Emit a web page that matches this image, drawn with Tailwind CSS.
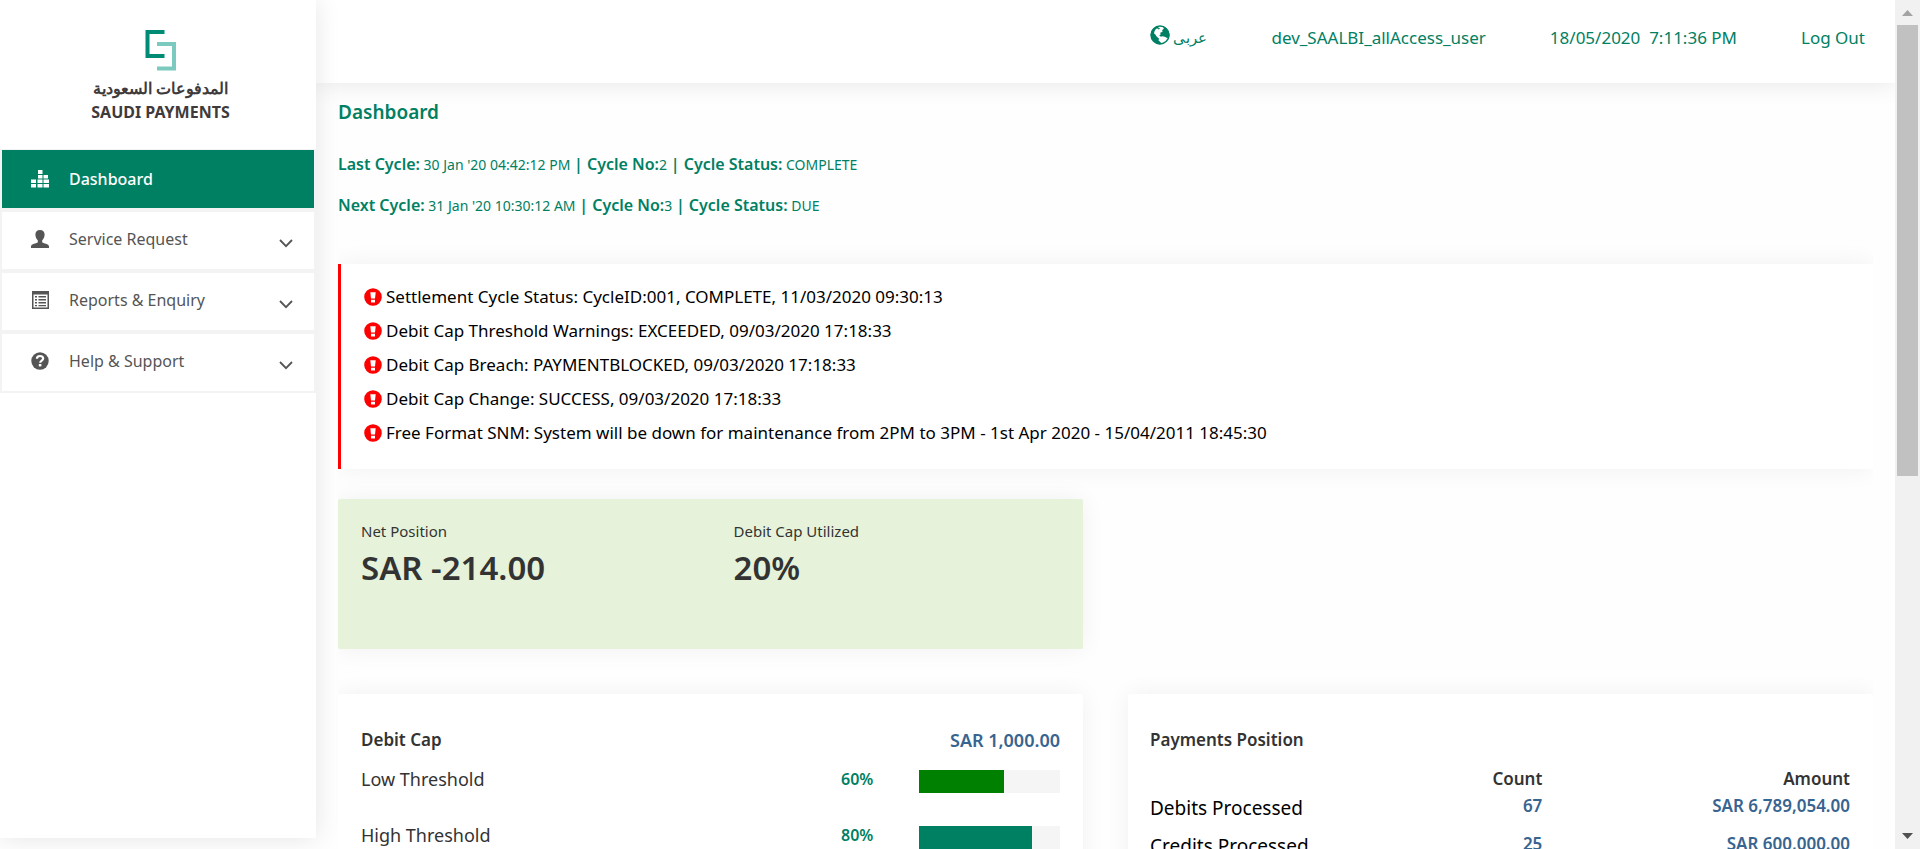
<!DOCTYPE html>
<html lang="en">
<head>
<meta charset="utf-8">
<title>Saudi Payments - Dashboard</title>
<script src="https://cdn.jsdelivr.net/npm/@tailwindcss/browser@4"></script>
</head>
<body class="flex h-screen overflow-hidden bg-[#fefefe] font-['Noto_Sans',sans-serif] text-[17px] text-[#333]">

<svg class="hidden">
  <symbol id="chevron" viewBox="0 0 14 9"><path d="M1 1l6 6.200L13 1" fill="none" stroke="currentColor" stroke-width="1.800"/></symbol>
  <symbol id="alert" viewBox="0 0 18 18"><path fill="#f00" fill-rule="evenodd" d="M9 .2a8.800 8.800 0 1 1 0 17.600A8.800 8.800 0 0 1 9 .2zM6.300 4.300l.7 6.200h4l.7-6.200zM7 11.800v2.600h4v-2.600z"/></symbol>
</svg>

<!-- Sidebar -->
<aside class="z-20 mb-[11px] w-[316px] shrink-0 bg-white shadow-[0_0_24px_rgba(0,0,0,0.1)]">
  <div class="flex h-[149px] flex-col items-center pt-[29px] pl-[5px] text-[#3f3a3c]">
    <svg class="h-[42px] w-[34px]" viewBox="0 0 34 42" fill="none" stroke-width="4">
      <path d="M20.500 3H3.500v24h17" stroke="#008b76"/>
      <path d="M13 15h17v24.500H13" stroke="#7cc9c0"/>
    </svg>
    <p class="mt-[5px] text-[16px] leading-[24px] font-bold" dir="rtl" lang="ar">المدفوعات السعودية</p>
    <p class="text-[16px] leading-[24px] font-bold">SAUDI PAYMENTS</p>
  </div>
  <nav>
    <ul class="text-[16px] text-[#555]">
      <li class="h-[61px] border-x-2 border-t border-b-2 border-[#f3f3f3]">
        <a href="#" class="flex h-full items-center bg-[#008063] pb-px pl-[29px] font-medium text-white">
          <svg class="h-[18px] w-[18px]" viewBox="0 0 18 18" fill="currentColor"><path d="M7 0h4.500v4H7zM7 5h4.500v3.500H7zM12.500 5H17v3.500h-4.500zM0 9.500h5v3.500H0zM6.500 9.500h5v3.500h-5zM12.500 9.500h5.500v3.500h-5.500zM0 14h5v3.500H0zM6.500 14h5v3.500h-5zM12.500 14h5.500v3.500h-5.500z"/></svg>
          <span class="ml-5">Dashboard</span>
        </a>
      </li>
      <li class="h-[61px] border-2 border-[#f3f3f3]">
        <a href="#" class="flex h-full items-center pr-[21px] pb-[3px] pl-[29px]">
          <svg class="h-[18px] w-[18px]" viewBox="0 0 18 18" fill="currentColor"><path d="M9 0c3 0 4.600 2 4.600 4.600 0 2.400-1 4.600-2.400 5.600v2c1 1.200 6.800 1.500 6.800 4.300V18H0v-1.500c0-2.800 5.800-3.100 6.800-4.300v-2C5.400 9.200 4.400 7 4.400 4.600 4.400 2 6 0 9 0z"/></svg>
          <span class="ml-5 grow">Service Request</span>
          <svg class="mt-[9px] h-[9px] w-[14px]"><use href="#chevron"/></svg>
        </a>
      </li>
      <li class="h-[61px] border-2 border-[#f3f3f3]">
        <a href="#" class="flex h-full items-center pr-[21px] pb-[3px] pl-[29px]">
          <svg class="h-[18px] w-[18px]" viewBox="0 0 18 18" fill="currentColor"><path fill-rule="evenodd" d="M1 0h17v18H1zM2.500 3.500v13h14v-13zM4 5h2v1.500H4zM7.500 5H15v1.500H7.500zM4 8h2v1.500H4zM7.500 8H15v1.500H7.500zM4 11h2v1.500H4zM7.500 11H15v1.500H7.500zM4 14h2v1.300H4zM7.500 14H15v1.300H7.500z"/></svg>
          <span class="ml-5 grow">Reports &amp; Enquiry</span>
          <svg class="mt-[9px] h-[9px] w-[14px]"><use href="#chevron"/></svg>
        </a>
      </li>
      <li class="h-[61px] border-2 border-[#f3f3f3]">
        <a href="#" class="flex h-full items-center pr-[21px] pb-[3px] pl-[29px]">
          <svg class="h-[18px] w-[18px]" viewBox="0 0 18 18"><circle cx="9" cy="9" r="8.700" fill="currentColor"/><path d="M5.900 6.800C5.900 4.900 7.200 4 9 4s3.200 1 3.200 2.600c0 2.100-3 2.100-3 4.200" fill="none" stroke="#fff" stroke-width="2.200"/><path d="M7.800 12h2.600v2.400H7.800z" fill="#fff"/></svg>
          <span class="ml-5 grow">Help &amp; Support</span>
          <svg class="mt-[9px] h-[9px] w-[14px]"><use href="#chevron"/></svg>
        </a>
      </li>
    </ul>
  </nav>
</aside>

<div class="flex min-w-0 grow flex-col overflow-hidden">
  <!-- Top bar -->
  <header class="z-10 flex h-[83px] shrink-0 items-start justify-end gap-16 bg-white pt-[24px] pr-[30px] leading-[28px] text-[#008063] shadow-[0_0_24px_rgba(0,0,0,0.1)]">
    <a href="#" class="flex gap-[3px]">
      <svg class="mt-px h-[20px] w-[20px]" viewBox="0 0 20 20"><circle cx="10" cy="10" r="9" fill="#fff" stroke="currentColor" stroke-width="1.400"/><path fill="currentColor" d="M9 1C4.500 1.200.7 5.200.8 10c.1 4.600 3.600 8.600 8.300 9.200l2-.2-.4-1.800-2.200-1.600.5-2.200-2.200-1.600-1.600-2.500-1.200-.8.6-2.500 1.500-2.200 2-.4z"/><path fill="currentColor" d="M13 1.500l.8 2-1.600 1.700.3 1.500-2.300 1 .4 1.800-1.300 1 1.600 1.200 1.400-.5 2.500.6 2.300 1.200 2-.4A9 9 0 0 0 13 1.500z"/><path fill="currentColor" d="M7.500 3.500l1.700-.8.8.9-1.200 1z"/></svg>
      <span class="text-[15px] leading-[26px]" dir="rtl" lang="ar">عربى</span>
    </a>
    <span>dev_SAALBI_allAccess_user</span>
    <time class="whitespace-pre">18/05/2020  7:11:36 PM</time>
    <a href="#">Log Out</a>
  </header>

  <main class="px-[22px] pt-[14px]">
    <div class="overflow-x-clip">
    <h1 class="text-[19px] leading-[30px] font-semibold text-[#008063]">Dashboard</h1>
    <div class="mt-[17px] text-[14px] leading-[41px] text-[#008063]">
      <p><b class="text-[16px] font-semibold">Last Cycle:</b> 30 Jan '20 04:42:12 PM <b class="text-[16px] font-semibold">| Cycle No:</b>2 <b class="text-[16px] font-semibold">| Cycle Status:</b> COMPLETE</p>
      <p><b class="text-[16px] font-semibold">Next Cycle:</b> 31 Jan '20 10:30:12 AM <b class="text-[16px] font-semibold">| Cycle No:</b>3 <b class="text-[16px] font-semibold">| Cycle Status:</b> DUE</p>
    </div>

    <section class="mt-[38px] border-l-[3px] border-[#f00] bg-white px-[23px] pt-[16px] pb-[19px] text-black shadow-[0_0_24px_rgba(0,0,0,0.06)]">
      <ul class="leading-[34px]">
        <li class="flex items-center gap-[4px]"><svg class="h-[18px] w-[18px] shrink-0"><use href="#alert"/></svg>Settlement Cycle Status: CycleID:001, COMPLETE, 11/03/2020 09:30:13</li>
        <li class="flex items-center gap-[4px]"><svg class="h-[18px] w-[18px] shrink-0"><use href="#alert"/></svg>Debit Cap Threshold Warnings: EXCEEDED, 09/03/2020 17:18:33</li>
        <li class="flex items-center gap-[4px]"><svg class="h-[18px] w-[18px] shrink-0"><use href="#alert"/></svg>Debit Cap Breach: PAYMENTBLOCKED, 09/03/2020 17:18:33</li>
        <li class="flex items-center gap-[4px]"><svg class="h-[18px] w-[18px] shrink-0"><use href="#alert"/></svg>Debit Cap Change: SUCCESS, 09/03/2020 17:18:33</li>
        <li class="flex items-center gap-[4px]"><svg class="h-[18px] w-[18px] shrink-0"><use href="#alert"/></svg>Free Format SNM: System will be down for maintenance from 2PM to 3PM - 1st Apr 2020 - 15/04/2011 18:45:30</li>
      </ul>
    </section>

    <div class="mt-[30px] grid grid-cols-2 gap-x-[45px] gap-y-[45px]">
      <section class="grid h-[150px] grid-cols-2 rounded-[2px] bg-[#e6f3da] pt-[20px] shadow-[0_0_24px_rgba(0,0,0,0.06)]">
        <div class="pl-[23px]">
          <h2 class="text-[15px] leading-[24px]">Net Position</h2>
          <p class="mt-[2px] text-[33px] leading-[46px] font-semibold">SAR -214.00</p>
        </div>
        <div class="pl-[23px]">
          <h2 class="text-[15px] leading-[24px]">Debit Cap Utilized</h2>
          <p class="mt-[2px] text-[33px] leading-[46px] font-semibold">20%</p>
        </div>
      </section>

      <section class="col-start-1 rounded-[2px] bg-white px-[23px] pt-[32px] pb-8 shadow-[0_0_24px_rgba(0,0,0,0.06)]">
        <div class="flex justify-between leading-[28px] font-semibold">
          <h2>Debit Cap</h2>
          <span class="text-[18px] text-[#386490]">SAR 1,000.00</span>
        </div>
        <div class="mt-[8px] flex h-[56px] items-start leading-[34px]">
          <span class="grow text-[18px]" id="low">Low Threshold</span>
          <span class="w-[78px] text-[16px] font-semibold text-[#008063]">60%</span>
          <div class="mt-[8px] h-[23px] w-[141px] bg-[#f5f5f5]" role="progressbar" aria-labelledby="low" aria-valuenow="60"><div class="h-full bg-[#008000]" style="width:60%"></div></div>
        </div>
        <div class="flex h-[56px] items-start leading-[34px]">
          <span class="grow text-[18px]" id="high">High Threshold</span>
          <span class="w-[78px] text-[16px] font-semibold text-[#008063]">80%</span>
          <div class="mt-[8px] h-[23px] w-[141px] bg-[#f5f5f5]" role="progressbar" aria-labelledby="high" aria-valuenow="80"><div class="h-full bg-[#008063]" style="width:80%"></div></div>
        </div>
      </section>

      <section class="rounded-[2px] bg-white pt-[32px] pr-[23px] pb-8 pl-[22px] shadow-[0_0_24px_rgba(0,0,0,0.06)]">
        <h2 class="leading-[28px] font-semibold">Payments Position</h2>
        <table class="mt-[11px] w-full table-fixed">
          <thead>
            <tr class="h-[28px] text-right leading-[28px]">
              <td class="w-1/3"></td>
              <th scope="col" class="w-[23%] pr-[2px] font-semibold">Count</th>
              <th scope="col" class="font-semibold">Amount</th>
            </tr>
          </thead>
          <tbody class="text-right align-top leading-[26px] font-semibold text-[#386490]">
            <tr class="h-[38px]">
              <th scope="row" class="text-left text-[19px] leading-[30px] font-normal text-black">Debits Processed</th>
              <td class="pr-[2px]">67</td>
              <td>SAR 6,789,054.00</td>
            </tr>
            <tr class="h-[38px]">
              <th scope="row" class="text-left text-[19px] leading-[30px] font-normal text-black">Credits Processed</th>
              <td class="pr-[2px]">25</td>
              <td>SAR 600,000.00</td>
            </tr>
          </tbody>
        </table>
      </section>
    </div>
    </div>
  </main>
</div>

<!-- Scroll bar -->
<div class="z-30 flex w-[25px] shrink-0 flex-col items-center bg-[#f1f1f1]" aria-hidden="true">
  <svg class="h-[25px] w-full shrink-0" viewBox="0 0 25 25"><path d="M7 16l5.500-6 5.500 6z" fill="#a3a3a3"/></svg>
  <div class="h-[451px] w-[21px] bg-[#c1c1c1]"></div>
  <svg class="mt-auto h-[25px] w-full shrink-0" viewBox="0 0 25 25"><path d="M7 9l5.500 6L18 9z" fill="#505050"/></svg>
</div>
</body>
</html>
